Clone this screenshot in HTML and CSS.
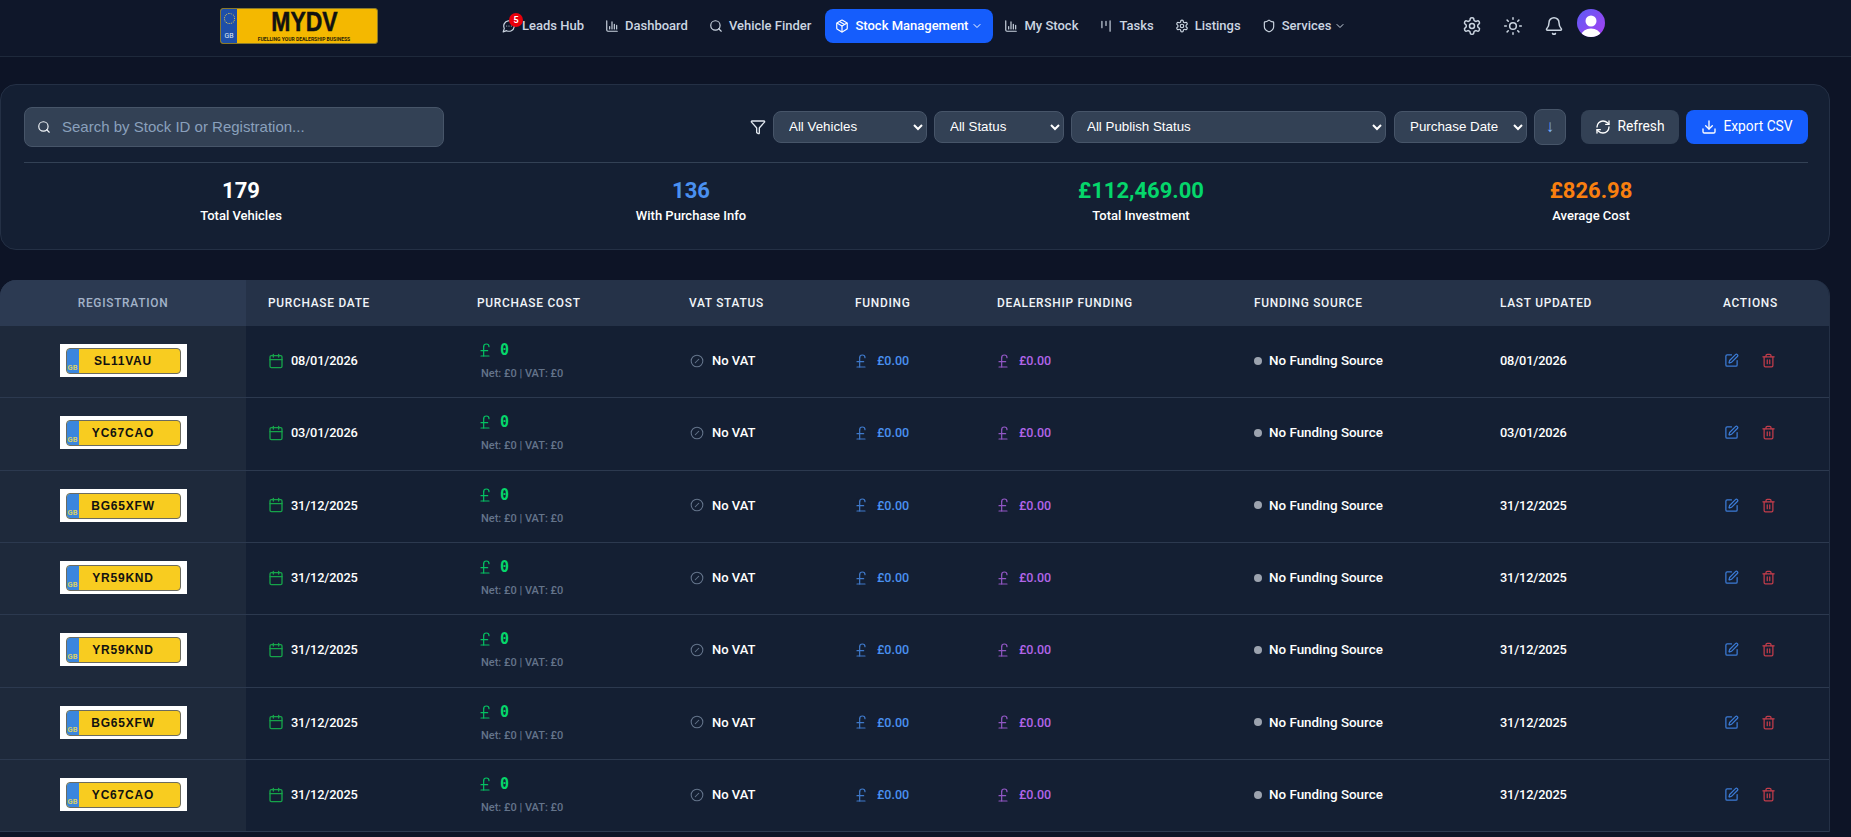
FILE: index.html
```html
<!DOCTYPE html>
<html lang="en">
<head>
<meta charset="utf-8">
<title>MYDV Stock Management</title>
<link rel="stylesheet" href="styles.css">
</head>
<body>
<svg class="defs" aria-hidden="true">
  <symbol id="i-msg" viewBox="0 0 24 24"><path d="M7.9 20A9 9 0 1 0 4 16.1L2 22Z"/><path d="M8 12h.01M12 12h.01M16 12h.01"/></symbol>
  <symbol id="i-chart" viewBox="0 0 24 24"><path d="M3 3v16a2 2 0 0 0 2 2h16"/><path d="M8 17v-4M12 17V5M16 17V9M20 17v-6"/></symbol>
  <symbol id="i-search" viewBox="0 0 24 24"><circle cx="11" cy="11" r="8"/><path d="m21 21-4.3-4.3"/></symbol>
  <symbol id="i-box" viewBox="0 0 24 24"><path d="M11 21.73a2 2 0 0 0 2 0l7-4A2 2 0 0 0 21 16V8a2 2 0 0 0-1-1.73l-7-4a2 2 0 0 0-2 0l-7 4A2 2 0 0 0 3 8v8a2 2 0 0 0 1 1.73z"/><path d="M12 22V12"/><path d="m3.3 7 8.7 5 8.7-5"/><path d="m7.5 4.27 9 5.15"/></symbol>
  <symbol id="i-chev" viewBox="0 0 24 24"><path d="m6 9 6 6 6-6"/></symbol>
  <symbol id="i-tasks" viewBox="0 0 24 24"><path d="M5 4v11M12 4v7M19 3v18"/></symbol>
  <symbol id="i-gear" viewBox="0 0 24 24"><path d="M12.22 2h-.44a2 2 0 0 0-2 2v.18a2 2 0 0 1-1 1.73l-.43.25a2 2 0 0 1-2 0l-.15-.08a2 2 0 0 0-2.73.73l-.22.38a2 2 0 0 0 .73 2.73l.15.1a2 2 0 0 1 1 1.72v.51a2 2 0 0 1-1 1.74l-.15.09a2 2 0 0 0-.73 2.73l.22.38a2 2 0 0 0 2.73.73l.15-.08a2 2 0 0 1 2 0l.43.25a2 2 0 0 1 1 1.73V20a2 2 0 0 0 2 2h.44a2 2 0 0 0 2-2v-.18a2 2 0 0 1 1-1.73l.43-.25a2 2 0 0 1 2 0l.15.08a2 2 0 0 0 2.73-.73l.22-.39a2 2 0 0 0-.73-2.73l-.15-.08a2 2 0 0 1-1-1.74v-.5a2 2 0 0 1 1-1.74l.15-.09a2 2 0 0 0 .73-2.73l-.22-.38a2 2 0 0 0-2.73-.73l-.15.08a2 2 0 0 1-2 0l-.43-.25a2 2 0 0 1-1-1.73V4a2 2 0 0 0-2-2z"/><circle cx="12" cy="12" r="3"/></symbol>
  <symbol id="i-shield" viewBox="0 0 24 24"><path d="M20 13c0 5-3.5 7.5-7.66 8.95a1 1 0 0 1-.67-.01C7.5 20.5 4 18 4 13V6a1 1 0 0 1 1-1c2 0 4.5-1.2 6.24-2.72a1.17 1.17 0 0 1 1.52 0C14.51 3.81 17 5 19 5a1 1 0 0 1 1 1z"/></symbol>
  <symbol id="i-sun" viewBox="0 0 24 24"><circle cx="12" cy="12" r="4"/><path d="M12 2v2M12 20v2M4.93 4.93l1.41 1.41M17.66 17.66l1.41 1.41M2 12h2M20 12h2M6.34 17.66l-1.41 1.41M19.07 4.93l-1.41 1.41"/></symbol>
  <symbol id="i-bell" viewBox="0 0 24 24"><path d="M10.27 21a2 2 0 0 0 3.46 0"/><path d="M3.26 15.33A1 1 0 0 0 4 17h16a1 1 0 0 0 .74-1.67C19.41 13.96 18 12.5 18 8A6 6 0 0 0 6 8c0 4.5-1.41 5.96-2.74 7.33"/></symbol>
  <symbol id="i-filter" viewBox="0 0 24 24"><path d="M10 20a1 1 0 0 0 .55.9l2 1A1 1 0 0 0 14 21v-7a2 2 0 0 1 .52-1.34L21.74 4.67A1 1 0 0 0 21 3H3a1 1 0 0 0-.74 1.67l7.22 7.99A2 2 0 0 1 10 14z"/></symbol>
  <symbol id="i-refresh" viewBox="0 0 24 24"><path d="M3 12a9 9 0 0 1 9-9 9.75 9.75 0 0 1 6.74 2.74L21 8"/><path d="M21 3v5h-5"/><path d="M21 12a9 9 0 0 1-9 9 9.75 9.75 0 0 1-6.74-2.74L3 16"/><path d="M8 16H3v5"/></symbol>
  <symbol id="i-download" viewBox="0 0 24 24"><path d="M12 15V3"/><path d="M21 15v4a2 2 0 0 1-2 2H5a2 2 0 0 1-2-2v-4"/><path d="m7 10 5 5 5-5"/></symbol>
  <symbol id="i-cal" viewBox="0 0 24 24"><path d="M8 2v4M16 2v4"/><rect x="3" y="4" width="18" height="18" rx="2"/><path d="M3 10h18"/></symbol>
  <symbol id="i-pound" viewBox="0 0 24 24"><path d="M18 7c0-5.333-8-5.333-8 0"/><path d="M10 7v14"/><path d="M6 21h12"/><path d="M6 13h10"/></symbol>
  <symbol id="i-noslash" viewBox="0 0 24 24"><circle cx="12" cy="12" r="10"/><path d="M9 15l6-6"/></symbol>
  <symbol id="i-edit" viewBox="0 0 24 24"><path d="M12 3H5a2 2 0 0 0-2 2v14a2 2 0 0 0 2 2h14a2 2 0 0 0 2-2v-7"/><path d="M18.375 2.625a1 1 0 0 1 3 3l-9.013 9.014a2 2 0 0 1-.853.505l-2.873.84a.5.5 0 0 1-.62-.62l.84-2.873a2 2 0 0 1 .506-.852z"/></symbol>
  <symbol id="i-trash" viewBox="0 0 24 24"><path d="M3 6h18"/><path d="M19 6v14a2 2 0 0 1-2 2H7a2 2 0 0 1-2-2V6"/><path d="M8 6V4a2 2 0 0 1 2-2h4a2 2 0 0 1 2 2v2"/><path d="M10 11v6M14 11v6"/></symbol>
</svg>

<header class="topbar">
  <div class="logo">
    <div class="logo-band"><span class="logo-stars"></span><span class="logo-gb">GB</span></div>
    <div class="logo-main"><span class="logo-title">MYDV</span><span class="logo-sub">FUELLING YOUR DEALERSHIP BUSINESS</span></div>
  </div>
  <nav class="nav">
    <a class="nav-item nav-leads"><svg class="ico"><use href="#i-msg"/></svg><span class="badge">5</span>Leads Hub</a>
    <a class="nav-item"><svg class="ico"><use href="#i-chart"/></svg>Dashboard</a>
    <a class="nav-item"><svg class="ico"><use href="#i-search"/></svg>Vehicle Finder</a>
    <a class="nav-item nav-active"><svg class="ico"><use href="#i-box"/></svg>Stock Management<svg class="ico-chev"><use href="#i-chev"/></svg></a>
    <a class="nav-item"><svg class="ico"><use href="#i-chart"/></svg>My Stock</a>
    <a class="nav-item"><svg class="ico"><use href="#i-tasks"/></svg>Tasks</a>
    <a class="nav-item"><svg class="ico"><use href="#i-gear"/></svg>Listings</a>
    <a class="nav-item"><svg class="ico"><use href="#i-shield"/></svg>Services<svg class="ico-chev"><use href="#i-chev"/></svg></a>
  </nav>
  <div class="top-actions">
    <svg class="ico-top"><use href="#i-gear"/></svg>
    <svg class="ico-top"><use href="#i-sun"/></svg>
    <svg class="ico-top ico-bell"><use href="#i-bell"/></svg>
    <svg class="avatar" viewBox="0 0 28 28"><defs><linearGradient id="av" x1="0" y1="0" x2="1" y2="1"><stop offset="0" stop-color="#5b5cf6"/><stop offset="1" stop-color="#a83ff0"/></linearGradient><clipPath id="avc"><circle cx="14" cy="14" r="14"/></clipPath></defs><circle cx="14" cy="14" r="14" fill="url(#av)"/><g clip-path="url(#avc)" fill="#fff"><circle cx="14" cy="12" r="5.5"/><ellipse cx="14" cy="26" rx="9.5" ry="6.5"/></g></svg>
  </div>
</header>

<main class="page">
  <section class="panel">
    <div class="toolbar">
      <label class="search"><svg class="ico-search"><use href="#i-search"/></svg><input class="search-input" type="text" placeholder="Search by Stock ID or Registration..."></label>
      <div class="controls">
        <svg class="ico-filter"><use href="#i-filter"/></svg>
        <select class="sel sel-vehicles"><option>All Vehicles</option></select>
        <select class="sel sel-status"><option>All Status</option></select>
        <select class="sel sel-publish"><option>All Publish Status</option></select>
        <select class="sel sel-sort"><option>Purchase Date</option></select>
        <button class="sort-btn">↓</button>
        <button class="btn btn-refresh"><svg class="ico-btn"><use href="#i-refresh"/></svg>Refresh</button>
        <button class="btn btn-export"><svg class="ico-btn"><use href="#i-download"/></svg>Export CSV</button>
      </div>
    </div>
    <div class="stats">
      <div class="stat"><div class="stat-num c-white">179</div><div class="stat-label">Total Vehicles</div></div>
      <div class="stat"><div class="stat-num c-blue">136</div><div class="stat-label">With Purchase Info</div></div>
      <div class="stat"><div class="stat-num c-green">£112,469.00</div><div class="stat-label">Total Investment</div></div>
      <div class="stat"><div class="stat-num c-orange">£826.98</div><div class="stat-label">Average Cost</div></div>
    </div>
  </section>

  <section class="table">
    <div class="row head">
      <div class="cell reg">REGISTRATION</div>
      <div class="cell">PURCHASE DATE</div>
      <div class="cell">PURCHASE COST</div>
      <div class="cell">VAT STATUS</div>
      <div class="cell">FUNDING</div>
      <div class="cell">DEALERSHIP FUNDING</div>
      <div class="cell">FUNDING SOURCE</div>
      <div class="cell">LAST UPDATED</div>
      <div class="cell act-head">ACTIONS</div>
    </div>

    <div class="row">
      <div class="cell reg"><div class="plate-box"><div class="plate"><span class="plate-band"><i class="plate-gb">GB</i></span><span class="plate-text">SL11VAU</span></div></div></div>
      <div class="cell date"><svg class="ico-cal"><use href="#i-cal"/></svg>08/01/2026</div>
      <div class="cell cost"><div class="cost-main"><svg class="ico-pound"><use href="#i-pound"/></svg><span class="cost-val">0</span></div><div class="cost-sub">Net: £0 | VAT: £0</div></div>
      <div class="cell vat"><svg class="ico-vat"><use href="#i-noslash"/></svg>No VAT</div>
      <div class="cell fund c-fund"><svg class="ico-fund"><use href="#i-pound"/></svg>£0.00</div>
      <div class="cell fund c-deal"><svg class="ico-fund"><use href="#i-pound"/></svg>£0.00</div>
      <div class="cell source"><span class="dot"></span>No Funding Source</div>
      <div class="cell date">08/01/2026</div>
      <div class="cell acts"><svg class="ico-edit"><use href="#i-edit"/></svg><svg class="ico-trash"><use href="#i-trash"/></svg></div>
    </div>
    <div class="row">
      <div class="cell reg"><div class="plate-box"><div class="plate"><span class="plate-band"><i class="plate-gb">GB</i></span><span class="plate-text">YC67CAO</span></div></div></div>
      <div class="cell date"><svg class="ico-cal"><use href="#i-cal"/></svg>03/01/2026</div>
      <div class="cell cost"><div class="cost-main"><svg class="ico-pound"><use href="#i-pound"/></svg><span class="cost-val">0</span></div><div class="cost-sub">Net: £0 | VAT: £0</div></div>
      <div class="cell vat"><svg class="ico-vat"><use href="#i-noslash"/></svg>No VAT</div>
      <div class="cell fund c-fund"><svg class="ico-fund"><use href="#i-pound"/></svg>£0.00</div>
      <div class="cell fund c-deal"><svg class="ico-fund"><use href="#i-pound"/></svg>£0.00</div>
      <div class="cell source"><span class="dot"></span>No Funding Source</div>
      <div class="cell date">03/01/2026</div>
      <div class="cell acts"><svg class="ico-edit"><use href="#i-edit"/></svg><svg class="ico-trash"><use href="#i-trash"/></svg></div>
    </div>
    <div class="row">
      <div class="cell reg"><div class="plate-box"><div class="plate"><span class="plate-band"><i class="plate-gb">GB</i></span><span class="plate-text">BG65XFW</span></div></div></div>
      <div class="cell date"><svg class="ico-cal"><use href="#i-cal"/></svg>31/12/2025</div>
      <div class="cell cost"><div class="cost-main"><svg class="ico-pound"><use href="#i-pound"/></svg><span class="cost-val">0</span></div><div class="cost-sub">Net: £0 | VAT: £0</div></div>
      <div class="cell vat"><svg class="ico-vat"><use href="#i-noslash"/></svg>No VAT</div>
      <div class="cell fund c-fund"><svg class="ico-fund"><use href="#i-pound"/></svg>£0.00</div>
      <div class="cell fund c-deal"><svg class="ico-fund"><use href="#i-pound"/></svg>£0.00</div>
      <div class="cell source"><span class="dot"></span>No Funding Source</div>
      <div class="cell date">31/12/2025</div>
      <div class="cell acts"><svg class="ico-edit"><use href="#i-edit"/></svg><svg class="ico-trash"><use href="#i-trash"/></svg></div>
    </div>
    <div class="row">
      <div class="cell reg"><div class="plate-box"><div class="plate"><span class="plate-band"><i class="plate-gb">GB</i></span><span class="plate-text">YR59KND</span></div></div></div>
      <div class="cell date"><svg class="ico-cal"><use href="#i-cal"/></svg>31/12/2025</div>
      <div class="cell cost"><div class="cost-main"><svg class="ico-pound"><use href="#i-pound"/></svg><span class="cost-val">0</span></div><div class="cost-sub">Net: £0 | VAT: £0</div></div>
      <div class="cell vat"><svg class="ico-vat"><use href="#i-noslash"/></svg>No VAT</div>
      <div class="cell fund c-fund"><svg class="ico-fund"><use href="#i-pound"/></svg>£0.00</div>
      <div class="cell fund c-deal"><svg class="ico-fund"><use href="#i-pound"/></svg>£0.00</div>
      <div class="cell source"><span class="dot"></span>No Funding Source</div>
      <div class="cell date">31/12/2025</div>
      <div class="cell acts"><svg class="ico-edit"><use href="#i-edit"/></svg><svg class="ico-trash"><use href="#i-trash"/></svg></div>
    </div>
    <div class="row">
      <div class="cell reg"><div class="plate-box"><div class="plate"><span class="plate-band"><i class="plate-gb">GB</i></span><span class="plate-text">YR59KND</span></div></div></div>
      <div class="cell date"><svg class="ico-cal"><use href="#i-cal"/></svg>31/12/2025</div>
      <div class="cell cost"><div class="cost-main"><svg class="ico-pound"><use href="#i-pound"/></svg><span class="cost-val">0</span></div><div class="cost-sub">Net: £0 | VAT: £0</div></div>
      <div class="cell vat"><svg class="ico-vat"><use href="#i-noslash"/></svg>No VAT</div>
      <div class="cell fund c-fund"><svg class="ico-fund"><use href="#i-pound"/></svg>£0.00</div>
      <div class="cell fund c-deal"><svg class="ico-fund"><use href="#i-pound"/></svg>£0.00</div>
      <div class="cell source"><span class="dot"></span>No Funding Source</div>
      <div class="cell date">31/12/2025</div>
      <div class="cell acts"><svg class="ico-edit"><use href="#i-edit"/></svg><svg class="ico-trash"><use href="#i-trash"/></svg></div>
    </div>
    <div class="row">
      <div class="cell reg"><div class="plate-box"><div class="plate"><span class="plate-band"><i class="plate-gb">GB</i></span><span class="plate-text">BG65XFW</span></div></div></div>
      <div class="cell date"><svg class="ico-cal"><use href="#i-cal"/></svg>31/12/2025</div>
      <div class="cell cost"><div class="cost-main"><svg class="ico-pound"><use href="#i-pound"/></svg><span class="cost-val">0</span></div><div class="cost-sub">Net: £0 | VAT: £0</div></div>
      <div class="cell vat"><svg class="ico-vat"><use href="#i-noslash"/></svg>No VAT</div>
      <div class="cell fund c-fund"><svg class="ico-fund"><use href="#i-pound"/></svg>£0.00</div>
      <div class="cell fund c-deal"><svg class="ico-fund"><use href="#i-pound"/></svg>£0.00</div>
      <div class="cell source"><span class="dot"></span>No Funding Source</div>
      <div class="cell date">31/12/2025</div>
      <div class="cell acts"><svg class="ico-edit"><use href="#i-edit"/></svg><svg class="ico-trash"><use href="#i-trash"/></svg></div>
    </div>
    <div class="row">
      <div class="cell reg"><div class="plate-box"><div class="plate"><span class="plate-band"><i class="plate-gb">GB</i></span><span class="plate-text">YC67CAO</span></div></div></div>
      <div class="cell date"><svg class="ico-cal"><use href="#i-cal"/></svg>31/12/2025</div>
      <div class="cell cost"><div class="cost-main"><svg class="ico-pound"><use href="#i-pound"/></svg><span class="cost-val">0</span></div><div class="cost-sub">Net: £0 | VAT: £0</div></div>
      <div class="cell vat"><svg class="ico-vat"><use href="#i-noslash"/></svg>No VAT</div>
      <div class="cell fund c-fund"><svg class="ico-fund"><use href="#i-pound"/></svg>£0.00</div>
      <div class="cell fund c-deal"><svg class="ico-fund"><use href="#i-pound"/></svg>£0.00</div>
      <div class="cell source"><span class="dot"></span>No Funding Source</div>
      <div class="cell date">31/12/2025</div>
      <div class="cell acts"><svg class="ico-edit"><use href="#i-edit"/></svg><svg class="ico-trash"><use href="#i-trash"/></svg></div>
    </div>
  </section>
</main>
</body>
</html>
```
FILE: styles.css
```css
* { box-sizing: border-box; }
html, body { height: 837px; overflow: hidden; }
body {
  margin: 0;
  background: #0d1426;
  font-family: Roboto, "Liberation Sans", sans-serif;
  color: #fff;
}
.defs { display: none; }
svg { fill: none; stroke: currentColor; stroke-width: 2; stroke-linecap: round; stroke-linejoin: round; flex: none; }

/* top bar */
.topbar {
  height: 57px;
  display: flex;
  align-items: center;
  padding: 0 0 5px 220px;
  background: #0f172a;
  border-bottom: 1px solid #1e293b;
}
.logo {
  width: 158px; height: 36px; display: flex;
  margin-top: 1px;
  background: #f4b800;
  border: 1px solid #8a7a2a;
  border-radius: 3px;
}
.logo-band {
  width: 16px; background: #1e4fa8; display: flex; flex-direction: column; align-items: center; justify-content: space-between; padding: 4px 0 3px;
  border-radius: 2px 0 0 2px;
}
.logo-stars { width: 11px; height: 11px; border: 1px dotted #e5c94a; border-radius: 50%; }
.logo-gb { font-size: 7px; color: #dfe7f5; line-height: 8px; }
.logo-main { flex: 1; display: flex; flex-direction: column; align-items: center; padding-right: 6px; }
.logo-title { font-family: "Liberation Sans", sans-serif; font-weight: 700; font-size: 28px; line-height: 26px; color: #111; transform: scaleX(.82); -webkit-text-stroke: .5px #111; }
.logo-sub { font-size: 5px; font-weight: 700; line-height: 7px; margin-top: 1px; color: #2a2208; white-space: nowrap; }

.nav { display: flex; align-items: center; margin-left: 114px; gap: 1px; }
.nav-item {
  position: relative;
  height: 34px; padding: 0 10px;
  display: flex; align-items: center; gap: 6px;
  font-size: 13px; font-weight: 500; color: #cbd5e1;
  white-space: nowrap; border-radius: 8px;
}
.nav-active { background: #155dfc; color: #fff; margin-left: 3px; }
.ico { width: 14px; height: 14px; stroke-width: 2; }
.ico-chev { width: 12px; height: 12px; margin-left: -3px; }
.badge {
  position: absolute; left: 17px; top: 4px;
  width: 14px; height: 14px; border-radius: 50%;
  background: #e7000b; color: #fff; font-size: 9px; font-weight: 700; line-height: 14px; text-align: center;
}
.top-actions { display: flex; align-items: center; margin-left: 106px; gap: 21px; color: #cbd5e1; }
.ico-top { width: 20px; height: 20px; stroke-width: 1.8; }
.ico-bell { margin-right: -8px; }
.avatar { width: 28px; height: 28px; stroke: none; margin-top: -5px; }

/* summary */
.page { width: 1830px; padding-top: 27px; }
.panel {
  height: 166px;
  padding: 22px 21px 0 23px;
  background: #141f33;
  border: 1px solid #243045;
  border-radius: 16px;
}
.toolbar { display: flex; justify-content: space-between; align-items: center; height: 40px; }
.search {
  position: relative; width: 420px; height: 40px; display: flex; align-items: center;
  background: #334155; border: 1px solid #475569; border-radius: 8px;
}
.ico-search { position: absolute; left: 12px; width: 14px; height: 14px; color: #f1f5f9; }
.search-input {
  width: 100%; height: 100%; padding: 0 12px 2px 37px;
  background: transparent; border: 0; outline: 0;
  font: 400 15px "Liberation Sans", Arial, sans-serif; color: #fff;
}
.search-input::placeholder { color: #8aa0bc; opacity: 1; }
.controls { display: flex; align-items: center; gap: 7px; }
.ico-filter { width: 16px; height: 16px; color: #e2e8f0; }
.sel {
  height: 32px; padding: 0 6px 2px 11px;
  background-color: #334155; border: 1px solid #475569; border-radius: 8px;
  color: #fff; font: 400 13.33px "Liberation Sans", Arial, sans-serif;
}
.sel-vehicles { width: 154px; }
.sel-status { width: 130px; }
.sel-publish { width: 315px; }
.sel-sort { width: 133px; margin-left: 1px; }
.sort-btn {
  width: 32px; height: 36px; padding: 0;
  background: #334155; border: 1px solid #475569; border-radius: 8px;
  color: #7db5ff; font: 400 17px "Liberation Sans", sans-serif;
}
.btn {
  height: 34px; padding: 0 0 3px; border: 0; border-radius: 8px; color: #fff;
  display: flex; align-items: center; justify-content: center; gap: 6px;
  font: 400 13.8px Roboto, sans-serif;
}
.ico-btn { width: 16px; height: 16px; margin-top: 3px; }
.btn-refresh { width: 98px; background: #334155; margin-left: 8px; }
.btn-export { width: 122px; background: #155dfc; }

.stats {
  margin-top: 15px; padding-top: 14px;
  border-top: 1px solid #334155;
  display: grid; grid-template-columns: repeat(4, 1fr); gap: 16px;
  text-align: center;
}
.stat-num { font-size: 22px; font-weight: 700; line-height: 28px; }
.stat-label { font-size: 13px; font-weight: 500; line-height: 18px; margin-top: 2px; }
.c-white { color: #fff; }
.c-blue { color: #4a90f0; }
.c-green { color: #05d66b; }
.c-orange { color: #f97f0f; }

/* table */
.table { margin-top: 30px; background: #141f33; border-right: 1px solid #243045; border-radius: 16px 16px 0 0; overflow: hidden; }
.row {
  display: grid;
  grid-template-columns: 246px 209px 212px 166px 142px 257px 246px 191px 160px;
  height: 72.33px;
  border-bottom: 1px solid #2c394f;
}
.head { height: 46px; border-bottom: 0; background: #253248; }
.cell { display: flex; align-items: center; padding: 0 0 2px 22px; font-size: 13px; font-weight: 500; white-space: nowrap; }
.head .cell { font-size: 11.9px; font-weight: 500; letter-spacing: .72px; color: #f1f5f9; padding-bottom: 1px; }
.reg { background: #1e293b; justify-content: center; padding-left: 0; }
.head .reg { background: #2c3a52; color: #a3b3c9; padding-left: 0; }
.head .act-head { padding-left: 54px; }
.plate-box { width: 127px; height: 33px; background: #fff; padding: 4px 6px; }
.plate { position: relative; height: 26px; display: flex; align-items: center; justify-content: center; background: #f8cc20; border: 1.5px solid #6b6b60; border-radius: 4px; overflow: hidden; }
.plate-band { position: absolute; left: 0; top: 0; bottom: 0; width: 12px; background: #3b86dd; display: flex; align-items: flex-end; justify-content: center; }
.plate-gb { font-style: normal; font-size: 7.5px; font-weight: 700; color: #d6cf6a; line-height: 10px; }
.plate-text { font: 700 12px "Liberation Sans", sans-serif; letter-spacing: .8px; color: #111; }
.date { font-size: 12.8px; letter-spacing: -.15px; }
.ico-cal { width: 16px; height: 16px; color: #16a34a; margin-right: 7px; }
.cost { flex-direction: column; align-items: flex-start; justify-content: center; }
.cost-main { display: flex; align-items: center; height: 20px; color: #05d66b; }
.ico-pound { width: 16px; height: 16px; margin-right: 7px; color: #05c062; stroke-width: 1.8; }
.cost-val { font: 700 15px "DejaVu Sans Mono", monospace; }
.cost-sub { font-size: 11px; font-weight: 500; color: #64748b; margin-top: 7px; padding-left: 4px; line-height: 14px; }
.ico-vat { width: 14px; height: 14px; color: #64748b; margin-right: 8px; margin-left: 1px; stroke-width: 1.8; }
.fund { font-size: 12.5px; }
.c-fund { color: #4a90f0; }
.c-deal { color: #b165e8; }
.ico-fund { width: 16px; height: 16px; margin: 0 8px 0 -2px; opacity: .8; stroke-width: 1.8; }
.source { font-size: 13.4px; }
.dot { width: 8px; height: 8px; border-radius: 50%; background: #9ca3af; margin-right: 7px; }
.acts { padding: 0 0 2px 55px; gap: 22px; }
.ico-edit { width: 15px; height: 15px; color: #3b7bd6; }
.ico-trash { width: 15px; height: 15px; color: #c23d4b; }
```
